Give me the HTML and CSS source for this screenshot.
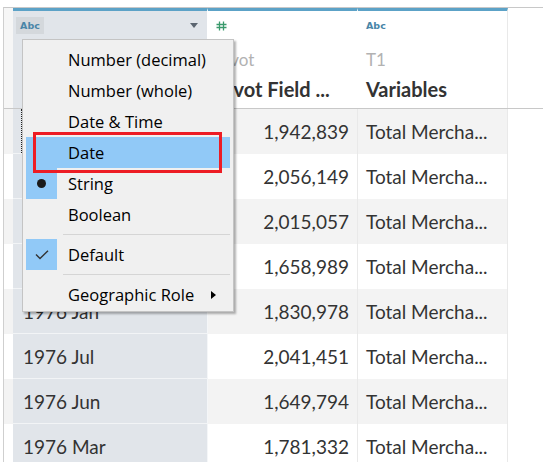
FILE: index.html
```html
<!DOCTYPE html>
<html>
<head>
<meta charset="utf-8">
<link rel="stylesheet" href="styles.css">
</head>
<body>
<div class="page">
  <div class="sheet">
    <div class="row head">
      <div class="gut"></div>
      <div class="cell c1 hd">
        <div class="type"><span class="badge">Abc</span><span class="caret"></span></div>
        <div class="src">Pivot</div>
        <div class="name">Pivot Field Val...</div>
      </div>
      <div class="cell c2 hd">
        <div class="type">
          <svg class="hash" width="11" height="10" viewBox="0 0 11 10"><path d="M3.5 0.5V9.5M7.5 0.5V9.5M0.5 3.5H10.5M0.5 6.5H10.5" stroke="#3a9a6c" stroke-width="1.3" fill="none"/></svg>
        </div>
        <div class="src">Pivot</div>
        <div class="name">Pivot Field ...</div>
      </div>
      <div class="cell c3 hd">
        <div class="type"><span class="abc">Abc</span></div>
        <div class="src">T1</div>
        <div class="name">Variables</div>
      </div>
      <div class="rest"></div>
    </div>

    <div class="row odd"><div class="gut"></div><div class="cell c1 focus">1976 Apr</div><div class="cell c2">1,942,839</div><div class="cell c3">Total Mercha...</div><div class="rest"></div></div>
    <div class="row"><div class="gut"></div><div class="cell c1">1976 Aug</div><div class="cell c2">2,056,149</div><div class="cell c3">Total Mercha...</div><div class="rest"></div></div>
    <div class="row odd"><div class="gut"></div><div class="cell c1">1976 Dec</div><div class="cell c2">2,015,057</div><div class="cell c3">Total Mercha...</div><div class="rest"></div></div>
    <div class="row"><div class="gut"></div><div class="cell c1">1976 Feb</div><div class="cell c2">1,658,989</div><div class="cell c3">Total Mercha...</div><div class="rest"></div></div>
    <div class="row odd"><div class="gut"></div><div class="cell c1">1976 Jan</div><div class="cell c2">1,830,978</div><div class="cell c3">Total Mercha...</div><div class="rest"></div></div>
    <div class="row"><div class="gut"></div><div class="cell c1">1976 Jul</div><div class="cell c2">2,041,451</div><div class="cell c3">Total Mercha...</div><div class="rest"></div></div>
    <div class="row odd"><div class="gut"></div><div class="cell c1">1976 Jun</div><div class="cell c2">1,649,794</div><div class="cell c3">Total Mercha...</div><div class="rest"></div></div>
    <div class="row"><div class="gut"></div><div class="cell c1">1976 Mar</div><div class="cell c2">1,781,332</div><div class="cell c3">Total Mercha...</div><div class="rest"></div></div>
  </div>

  <div class="menu">
    <div class="item"><span class="ico"></span><span class="lbl">Number (decimal)</span></div>
    <div class="item"><span class="ico"></span><span class="lbl">Number (whole)</span></div>
    <div class="item"><span class="ico"></span><span class="lbl">Date &amp; Time</span></div>
    <div class="item sel"><span class="ico"></span><span class="lbl">Date</span></div>
    <div class="item"><span class="ico on"><span class="dot"></span></span><span class="lbl">String</span></div>
    <div class="item"><span class="ico"></span><span class="lbl">Boolean</span></div>
    <div class="sep"></div>
    <div class="item"><span class="ico on">
      <svg width="14" height="10" viewBox="0 0 14 10"><path d="M1 4.5L5 8.5L13 0.8" stroke="#333" stroke-width="1.4" fill="none"/></svg>
    </span><span class="lbl">Default</span></div>
    <div class="sep"></div>
    <div class="item"><span class="ico"></span><span class="lbl">Geographic Role</span><span class="sub"></span></div>
  </div>
  <div class="redbox"></div>
</div>
</body>
</html>
```

FILE: styles.css
```css
* { box-sizing: border-box; }
html, body { margin: 0; padding: 0; background: #fff; }
body { font-family: Lato, "Open Sans", sans-serif; color: #333; }

.page { position: relative; width: 543px; height: 462px; overflow: hidden; padding-top: 7px; }

.sheet {
  margin-left: 3px;
  border-left: 1px solid #cfcfcf;
  border-top: 1px solid #c8c8c8;
}

.row { display: flex; height: 45px; }
.row.head { height: 101px; border-bottom: 1px solid #c8c8c8; }

.gut { width: 9px; flex: none; background: #fff; }
.head .gut { background: #f6f6f6; }
.row.odd .gut { background: #f3f3f3; }

.cell {
  flex: none;
  display: flex;
  align-items: center;
  font-size: 19px;
  white-space: nowrap;
  overflow: hidden;
  color: #333;
}
.c1 { width: 195px; background: #e1e5ea; padding-left: 10px; border-bottom: 1px solid #f2f4f6; border-right: 1px solid #f4f6f8; position: relative; }
.c2 { width: 150px; justify-content: flex-end; padding-right: 8px; border-right: 1px solid #e9e9e9; }
.c3 { width: 150px; padding-left: 8px; border-right: 1px solid #e9e9e9; }
.rest { flex: 1; }
.row.odd .c2, .row.odd .c3 { background: #f3f3f3; }

.focus::before {
  content: "";
  position: absolute;
  left: 8px; top: 0; right: 8px; bottom: 0;
  border: 1px dotted #222;
}

/* header */
.cell.hd {
  flex-direction: column;
  align-items: flex-start;
  justify-content: flex-start;
  border-top: 3px solid #5ca2c7;
  padding-top: 6px;
  padding-left: 8px;
  padding-right: 8px;
  border-bottom: none;
}
.c1.hd { padding-left: 3px; border-right: 1px solid #fff; }
.c1.hd .src, .c1.hd .name { margin-left: 8px; }
.c2.hd { border-right: 1px solid #fff; }
.c3.hd { border-right: 1px solid #e9e9e9; }
.head .c2, .head .c3 { background: #fff; }

.type { height: 17px; display: flex; align-items: center; width: 100%; }
.badge {
  display: inline-block;
  height: 17px; width: 28px;
  line-height: 17px;
  text-align: center;
  background: #d4d8dc;
  color: #4a86a8;
  font-family: "DejaVu Sans", sans-serif;
  font-size: 9.5px;
  font-weight: bold;
}
.caret {
  margin-left: auto;
  margin-right: 1px;
  width: 0; height: 0;
  border-left: 4px solid transparent;
  border-right: 4px solid transparent;
  border-top: 5px solid #5b6570;
}
.abc { color: #4a86a8; font-family: "DejaVu Sans", sans-serif; font-size: 9.5px; font-weight: bold; }
.hash { display: block; }

.src { margin-top: 15px; height: 22px; line-height: 22px; font-size: 17px; color: #b2b2b2; }
.name { margin-top: 6px; height: 24px; line-height: 24px; font-size: 20px; font-weight: bold; color: #333; }

/* menu */
.menu {
  position: absolute;
  left: 22px; top: 39px;
  width: 212px; height: 273px;
  background: #f0f0f0;
  border: 1px solid #c4c4c4;
  box-shadow: 2px 2px 2px rgba(0,0,0,0.3);
  padding: 4px 3px 3px 3px;
  font-family: "Open Sans", sans-serif;
  font-size: 16.5px;
  color: #000;
}
.item { display: flex; align-items: center; height: 31px; }
.item.sel { background: #91c9f7; }
.ico { width: 31px; height: 31px; flex: none; display: flex; align-items: center; justify-content: center; }
.ico.on { background: #91c9f7; }
.dot { width: 9px; height: 9px; border-radius: 50%; background: #1a1a1a; }
.lbl { margin-left: 11px; }
.sub {
  margin-left: auto; margin-right: 14px;
  width: 0; height: 0;
  border-top: 4px solid transparent;
  border-bottom: 4px solid transparent;
  border-left: 5px solid #000;
}
.sep { padding: 4px 0 4px 37px; height: 9px; }
.sep::after { content: ""; display: block; height: 1px; background: #d5d5d5; }

.redbox {
  position: absolute;
  left: 33px; top: 132px;
  width: 189px; height: 41px;
  border: 3px solid #ed1c24;
}
```
